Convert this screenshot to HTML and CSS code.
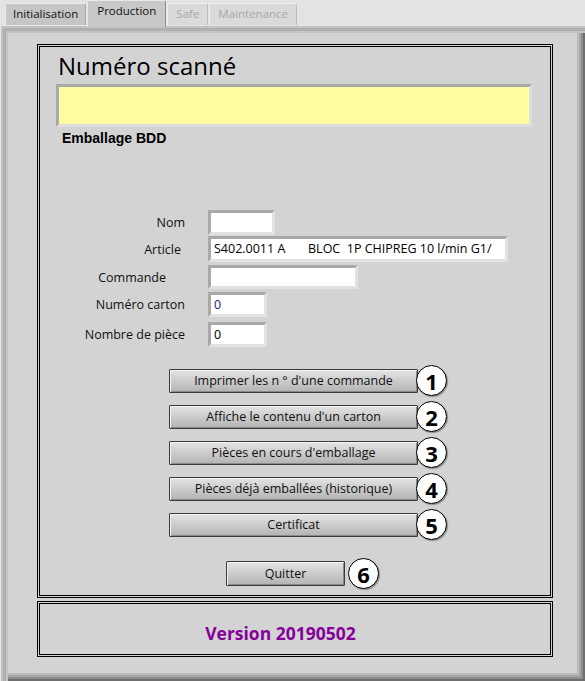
FILE: index.html
```html
<!DOCTYPE html>
<html lang="fr">
<head>
<meta charset="utf-8">
<title>Production</title>
<link rel="stylesheet" href="styles.css">
</head>
<body>
<div class="tabs">
  <div class="tab">Initialisation</div>
  <div class="tab active">Production</div>
  <div class="tab disabled">Safe</div>
  <div class="tab disabled">Maintenance</div>
</div>
<div class="panel">
  <div class="frame main">
    <h1 class="title">Numéro scanné</h1>
    <div class="scan"></div>
    <div class="bdd">Emballage BDD</div>
    <div class="form">
      <div class="row r-nom"><span class="lbl">Nom</span><div class="field w-nom"></div></div>
      <div class="row r-art"><span class="lbl l-art">Article</span><div class="field w-art">S402.0011 A       BLOC  1P CHIPREG 10 l/min G1/</div></div>
      <div class="row r-cmd"><span class="lbl l-cmd">Commande</span><div class="field w-cmd"></div></div>
      <div class="row r-car"><span class="lbl">Numéro carton</span><div class="field w-num num">0</div></div>
      <div class="row r-pie"><span class="lbl">Nombre de pièce</span><div class="field w-num">0</div></div>
    </div>
    <div class="actions">
      <div class="act"><button class="btn wide">Imprimer les n ° d'une commande</button><span class="badge">1</span></div>
      <div class="act"><button class="btn wide">Affiche le contenu d'un carton</button><span class="badge">2</span></div>
      <div class="act"><button class="btn wide">Pièces en cours d'emballage</button><span class="badge">3</span></div>
      <div class="act"><button class="btn wide">Pièces déjà emballées (historique)</button><span class="badge">4</span></div>
      <div class="act"><button class="btn wide">Certificat</button><span class="badge">5</span></div>
    </div>
    <div class="act quit"><button class="btn narrow">Quitter</button><span class="badge">6</span></div>
  </div>
  <div class="frame ver">Version 20190502</div>
</div>
</body>
</html>
```
FILE: styles.css
```css
* { box-sizing: border-box; }
html, body { margin: 0; padding: 0; }
body {
  width: 585px;
  height: 681px;
  background: #e3e3e3;
  font-family: "Open Sans", "Noto Sans", sans-serif;
  color: #111;
  overflow: hidden;
}

/* Tabs */
.tabs {
  height: 25px;
  display: flex;
  align-items: flex-end;
  padding-left: 5px;
  gap: 1px;
  position: relative;
  z-index: 1;
}
.tab {
  height: 22px;
  padding: 0 7px;
  font-size: 11.5px;
  line-height: 20px;
  background: #c6c6c6;
  border: 1px solid #a9a9a9;
  border-top-color: #ececec;
  border-left-color: #ececec;
  border-bottom: none;
  border-radius: 2px 2px 0 0;
  color: #111;
}
.tab.active {
  height: 27px;
  margin-bottom: -2px;
  padding: 0 9px;
  line-height: 20px;
  background: #c8c8c8;
  border-color: #e8e8e8 #8e8e8e #8e8e8e #e8e8e8;
}
.tab.disabled {
  padding: 0 8px;
  background: #dadada;
  color: #a6a6a6;
  border-color: #f0f0f0 #bdbdbd #bdbdbd #f0f0f0;
}

/* Main panel */
.panel {
  height: 656px;
  background: #d3d3d3;
  padding: 19px 32px 24px 37px;
  display: flex;
  flex-direction: column;
  gap: 3px;
  box-shadow:
    inset 1px 1px 0 #e6e6e6,
    inset 3px 3px 0 #c2c2c2,
    inset 6px 6px 0 #b0b0b0,
    inset 8px 8px 0 #c4c4c4,
    inset -2px -2px 0 #6e6e6e,
    inset -4px -4px 0 #8e8e8e,
    inset -6px -6px 0 #a8a8a8,
    inset -8px -8px 0 #bcbcbc;
}

.frame {
  border: 3px double #000;
  width: 516px;
}
.main {
  height: 554px;
  padding: 0 0 0 16px;
}
.title {
  margin: 3px 0 0 2px;
  font-weight: 400;
  font-size: 24px;
  line-height: 32px;
  color: #000;
}
.scan {
  margin-top: 2px;
  width: 476px;
  height: 43px;
  background: #fffd9f;
  border: 3px solid;
  border-color: #a9a9a9 #dedede #dedede #a9a9a9;
}
.bdd {
  margin: 3px 0 0 6px;
  font-family: "Liberation Sans", Arial, sans-serif;
  font-weight: 700;
  font-size: 14px;
  line-height: 16px;
  color: #000;
}

/* Form */
.form {
  margin-top: 64px;
  margin-left: -16px;
  display: flex;
  flex-direction: column;
}
.row {
  display: flex;
  align-items: center;
}
.lbl {
  width: 145px;
  text-align: right;
  font-size: 12.5px;
  margin-right: 23px;
  color: #111;
}
.l-art { padding-right: 4px; }
.l-cmd { padding-right: 19px; }
.r-art { margin-top: 1px; }
.r-cmd { margin-top: 3px; }
.r-car { margin-top: 3px; }
.r-pie { margin-top: 5px; }
.field {
  height: 25px;
  background: #fff;
  border: 3px solid;
  border-color: #a9a9a9 #e2e2e2 #e2e2e2 #a9a9a9;
  font-size: 12.5px;
  line-height: 19px;
  padding-left: 3px;
  white-space: pre;
  color: #000;
}
.w-nom { width: 67px; }
.w-art { width: 300px; height: 26px; }
.w-cmd { width: 150px; height: 24px; }
.w-num { width: 59px; }
.num { color: #1a237e; }

/* Buttons */
.actions {
  margin-top: 18px;
  display: flex;
  flex-direction: column;
  gap: 5px;
}
.act {
  display: flex;
  align-items: center;
  margin-left: 113px;
}
.btn {
  height: 24px;
  font-family: "Open Sans", "Noto Sans", sans-serif;
  font-size: 12.5px;
  color: #111;
  padding: 0;
  border: 1px solid #3a3a3a;
  border-radius: 1px;
  background: linear-gradient(#e4e4e4, #c9c9c9 55%, #b3b3b3);
  box-shadow: inset 1px 1px 0 #f4f4f4, inset -1px -1px 0 #8a8a8a;
}
.wide { width: 249px; }
.narrow { width: 119px; height: 25px; }
.badge {
  width: 31px;
  height: 31px;
  margin-left: -2px;
  border-radius: 50%;
  background: #fff;
  border: 1.5px solid #000;
  box-shadow: 1px 1px 1px #8a8a8a;
  display: flex;
  align-items: center;
  justify-content: center;
  font-family: "Open Sans", "Noto Sans", sans-serif;
  font-weight: 700;
  font-size: 22px;
  line-height: 1;
  color: #000;
  position: relative;
}
.quit {
  margin-top: 18px;
  margin-left: 170px;
}
.quit .badge { margin-left: 3px; }

/* Version */
.ver {
  height: 56px;
  display: flex;
  align-items: center;
  justify-content: center;
  padding: 7px 29px 0 0;
  font-family: "Open Sans", "Noto Sans", sans-serif;
  font-weight: 700;
  font-size: 17.5px;
  color: #85009a;
}
```
